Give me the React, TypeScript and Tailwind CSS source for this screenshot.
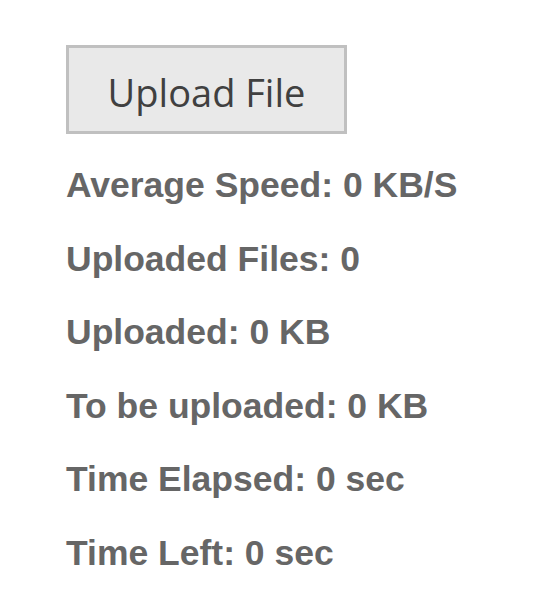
import React from 'react'

const stats = [
  ['Average Speed', '0 KB/S'],
  ['Uploaded Files', '0'],
  ['Uploaded', '0 KB'],
  ['To be uploaded', '0 KB'],
  ['Time Elapsed', '0 sec'],
  ['Time Left', '0 sec'],
]

export default function App() {
  return (
    <div className="min-h-screen bg-white pl-[66px] pt-[45px]">
      <button className="flex items-center justify-center w-[281px] h-[89px] pt-[5px] border-[3px] border-[#c0c0c0] bg-[#e9e9e9] text-[38px] text-[#404040] font-['Open_Sans',sans-serif]">
        Upload File
      </button>
      <div className="mt-[31px] flex flex-col gap-[33.5px]">
        {stats.map(([label, value]) => (
          <p key={label} className="text-[#666666] text-[35.5px] font-bold leading-[40px] font-['Liberation_Sans',sans-serif]">
            {label}: {value}
          </p>
        ))}
      </div>
    </div>
  )
}
